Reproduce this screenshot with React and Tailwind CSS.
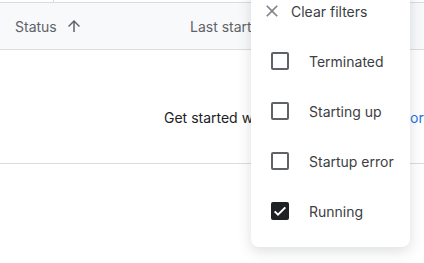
const options = [
  { label: "Terminated", checked: false },
  { label: "Starting up", checked: false },
  { label: "Startup error", checked: false },
  { label: "Running", checked: true },
];

function ArrowUp() {
  return (
    <svg width="18" height="18" viewBox="0 0 24 24" fill="#5f6368">
      <path d="M4 12l1.41 1.41L11 7.83V20h2V7.83l5.58 5.59L20 12l-8-8-8 8z" />
    </svg>
  );
}

function CloseIcon() {
  return (
    <svg width="20" height="20" viewBox="0 0 24 24" fill="#80868b">
      <path d="M19 6.41L17.59 5 12 10.59 6.41 5 5 6.41 10.59 12 5 17.59 6.41 19 12 13.41 17.59 19 19 17.59 13.41 12z" />
    </svg>
  );
}

function Checkbox({ checked }) {
  if (checked) {
    return (
      <div className="w-[18px] h-[18px] rounded-[2px] bg-[#202124] flex items-center justify-center">
        <svg width="16" height="16" viewBox="0 0 24 24" fill="none">
          <path d="M4 12.5l5 5 11-11" stroke="white" strokeWidth="3" />
        </svg>
      </div>
    );
  }
  return <div className="w-[18px] h-[18px] rounded-[2px] border-2 border-[#5f6368]" />;
}

export default function App() {
  return (
    <div
      className="relative w-[424px] h-[263px] overflow-hidden bg-white text-[14px] text-[#202124]"
      style={{ fontFamily: "Inter, 'Noto Sans', sans-serif" }}
    >
      {/* top strip */}
      <div className="h-[3px] border-b border-[#dadce0] flex">
        <div className="w-[54px] border-r border-[#dadce0]" />
      </div>

      {/* header */}
      <div className="h-[47px] bg-[#f8f9fa] border-b border-[#dadce0] flex items-center text-[#5f6368]">
        <div className="w-[190px] pl-[15px] flex items-center gap-[8px]">
          <span>Status</span>
          <ArrowUp />
        </div>
        <span className="whitespace-nowrap">Last started</span>
      </div>

      {/* empty state */}
      <div className="h-[114px] border-b border-[#dadce0] flex items-start pt-[57px] pl-[164px] whitespace-nowrap">
        <span>Get started with a notebook</span>
        <span className="ml-auto w-[14px] shrink-0 text-[#1a73e8]">or</span>
      </div>

      {/* filter menu */}
      <div className="absolute left-[251px] top-[-22px] w-[159px] pt-2 pb-[11px] bg-white rounded-lg shadow-[0_4px_14px_rgba(60,64,67,0.18)]">
        <div className="h-[50px] flex items-center pl-[11px] gap-[9px] text-[#3c4043]">
          <CloseIcon />
          <span>Clear filters</span>
        </div>
        {options.map((o) => (
          <div key={o.label} className="h-[50px] flex items-center pl-[20px] gap-[20px] text-[#3c4043]">
            <Checkbox checked={o.checked} />
            <span>{o.label}</span>
          </div>
        ))}
      </div>
    </div>
  );
}
